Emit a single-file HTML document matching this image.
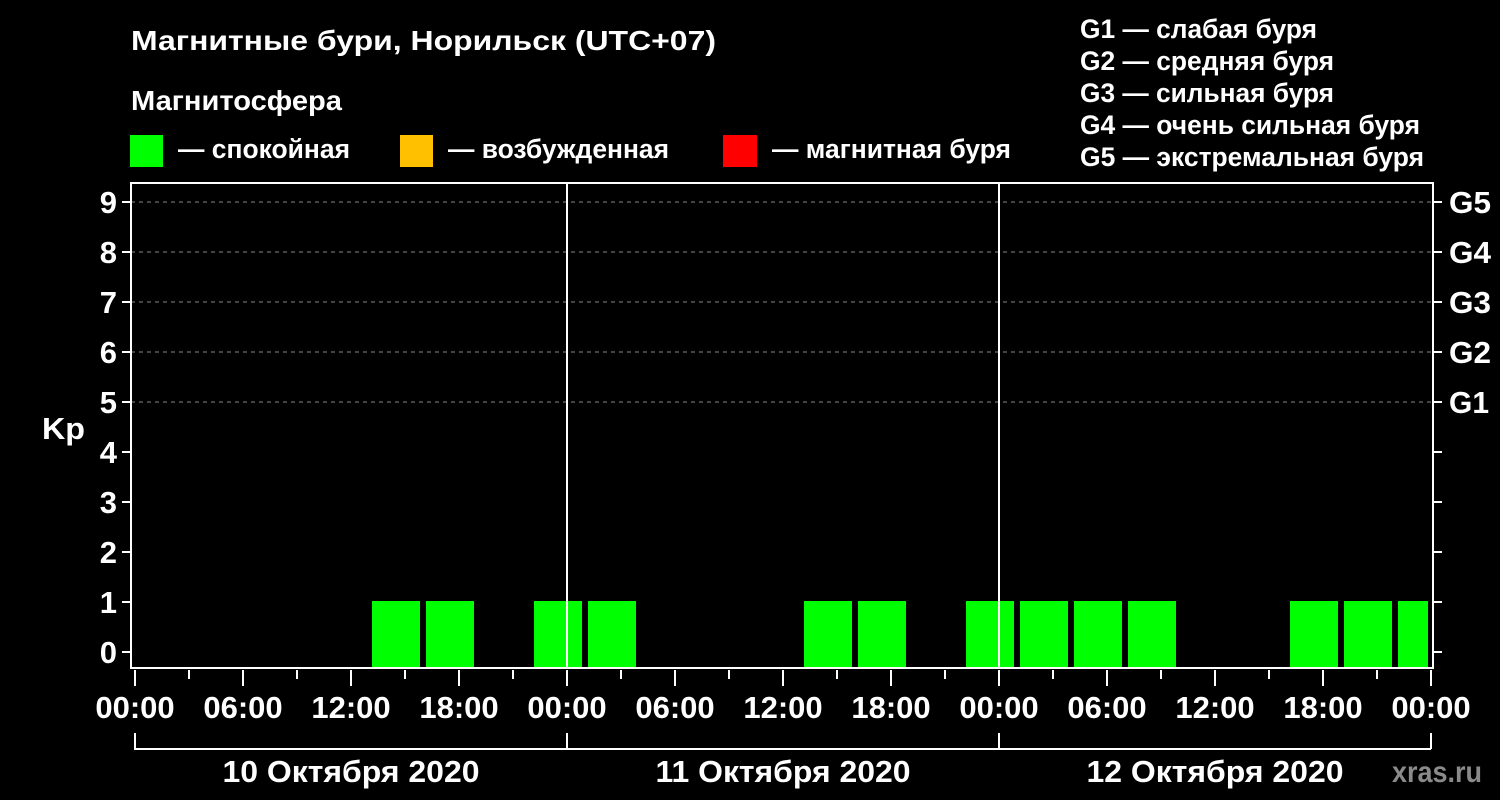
<!DOCTYPE html>
<html><head><meta charset="utf-8"><style>
html,body{margin:0;padding:0;background:#000;width:1500px;height:800px;overflow:hidden}
text{font-family:"Liberation Sans",sans-serif;font-weight:bold;fill:#fff}
</style></head><body>
<svg width="1500" height="800" xmlns="http://www.w3.org/2000/svg">
<rect width="1500" height="800" fill="#000"/>
<text x="131" y="50" font-size="28" textLength="585" lengthAdjust="spacingAndGlyphs">Магнитные бури, Норильск (UTC+07)</text>
<text x="131" y="110" font-size="28" textLength="211" lengthAdjust="spacingAndGlyphs">Магнитосфера</text>
<rect x="130" y="135" width="33" height="32" fill="#00ff00"/>
<text x="178" y="158" font-size="27" textLength="172" lengthAdjust="spacingAndGlyphs">— спокойная</text>
<rect x="400" y="135" width="33" height="32" fill="#ffc000"/>
<text x="448" y="158" font-size="27" textLength="221" lengthAdjust="spacingAndGlyphs">— возбужденная</text>
<rect x="723" y="135" width="34" height="32" fill="#ff0000"/>
<text x="772" y="158" font-size="27" textLength="239" lengthAdjust="spacingAndGlyphs">— магнитная буря</text>
<g font-size="27">
<text x="1080" y="38" textLength="237" lengthAdjust="spacingAndGlyphs">G1 — слабая буря</text>
<text x="1080" y="70" textLength="254" lengthAdjust="spacingAndGlyphs">G2 — средняя буря</text>
<text x="1080" y="102" textLength="254" lengthAdjust="spacingAndGlyphs">G3 — сильная буря</text>
<text x="1080" y="134" textLength="340" lengthAdjust="spacingAndGlyphs">G4 — очень сильная буря</text>
<text x="1080" y="166" textLength="344" lengthAdjust="spacingAndGlyphs">G5 — экстремальная буря</text>
</g>
<g stroke="#888" stroke-dasharray="4,4" stroke-width="1">
<line x1="131" y1="202" x2="1433" y2="202"/><line x1="131" y1="252" x2="1433" y2="252"/>
<line x1="131" y1="302" x2="1433" y2="302"/><line x1="131" y1="352" x2="1433" y2="352"/>
<line x1="131" y1="402" x2="1433" y2="402"/>
</g>
<g fill="#00ff00">
<rect x="372" y="601" width="48" height="67"/><rect x="426" y="601" width="48" height="67"/>
<rect x="534" y="601" width="48" height="67"/><rect x="588" y="601" width="48" height="67"/>
<rect x="804" y="601" width="48" height="67"/><rect x="858" y="601" width="48" height="67"/>
<rect x="966" y="601" width="48" height="67"/><rect x="1020" y="601" width="48" height="67"/>
<rect x="1074" y="601" width="48" height="67"/><rect x="1128" y="601" width="48" height="67"/>
<rect x="1290" y="601" width="48" height="67"/><rect x="1344" y="601" width="48" height="67"/>
<rect x="1398" y="601" width="30" height="67"/>
</g>
<g stroke="#fff" stroke-width="2" fill="none">
<rect x="131" y="183" width="1302" height="485"/>
<line x1="567" y1="183" x2="567" y2="668"/><line x1="999" y1="183" x2="999" y2="668"/>
<path d="M122 202H131M122 252H131M122 302H131M122 352H131M122 402H131M122 452H131M122 502H131M122 552H131M122 602H131M122 652H131"/>
<path d="M1433 202H1442M1433 252H1442M1433 302H1442M1433 352H1442M1433 402H1442M1433 452H1442M1433 502H1442M1433 552H1442M1433 602H1442M1433 652H1442"/>
<path d="M135 670V686M243 670V686M351 670V686M459 670V686M567 670V686M675 670V686M783 670V686M891 670V686M999 670V686M1107 670V686M1215 670V686M1323 670V686M1431 670V686"/>
<path d="M189 670V679M297 670V679M405 670V679M513 670V679M621 670V679M729 670V679M837 670V679M945 670V679M1053 670V679M1161 670V679M1269 670V679M1377 670V679"/>
<path d="M135 733V749H1431M567 733V749M999 733V749M1431 733V749"/>
</g>
<g font-size="31" text-anchor="end">
<text x="117" y="213">9</text><text x="117" y="263">8</text><text x="117" y="313">7</text>
<text x="117" y="363">6</text><text x="117" y="413">5</text><text x="117" y="463">4</text>
<text x="117" y="513">3</text><text x="117" y="563">2</text><text x="117" y="613">1</text>
<text x="117" y="663">0</text>
</g>
<text x="42" y="439" font-size="31" textLength="43" lengthAdjust="spacingAndGlyphs">Kp</text>
<g font-size="31">
<text x="1449" y="213" textLength="42" lengthAdjust="spacingAndGlyphs">G5</text><text x="1449" y="263" textLength="42" lengthAdjust="spacingAndGlyphs">G4</text><text x="1449" y="313" textLength="42" lengthAdjust="spacingAndGlyphs">G3</text>
<text x="1449" y="363" textLength="42" lengthAdjust="spacingAndGlyphs">G2</text><text x="1449" y="413" textLength="40" lengthAdjust="spacingAndGlyphs">G1</text>
</g>
<g font-size="31" text-anchor="middle">
<text x="135" y="718">00:00</text><text x="243" y="718">06:00</text><text x="351" y="718">12:00</text>
<text x="459" y="718">18:00</text><text x="567" y="718">00:00</text><text x="675" y="718">06:00</text>
<text x="783" y="718">12:00</text><text x="891" y="718">18:00</text><text x="999" y="718">00:00</text>
<text x="1107" y="718">06:00</text><text x="1215" y="718">12:00</text><text x="1323" y="718">18:00</text>
<text x="1431" y="718">00:00</text>
<text x="351" y="782" textLength="257" lengthAdjust="spacingAndGlyphs">10 Октября 2020</text>
<text x="783" y="782" textLength="255" lengthAdjust="spacingAndGlyphs">11 Октября 2020</text>
<text x="1215" y="782" textLength="257" lengthAdjust="spacingAndGlyphs">12 Октября 2020</text>
</g>
<text x="1392" y="782" font-size="30" textLength="90" lengthAdjust="spacingAndGlyphs" style="fill:#8a8a8a">xras.ru</text>
</svg>
</body></html>
